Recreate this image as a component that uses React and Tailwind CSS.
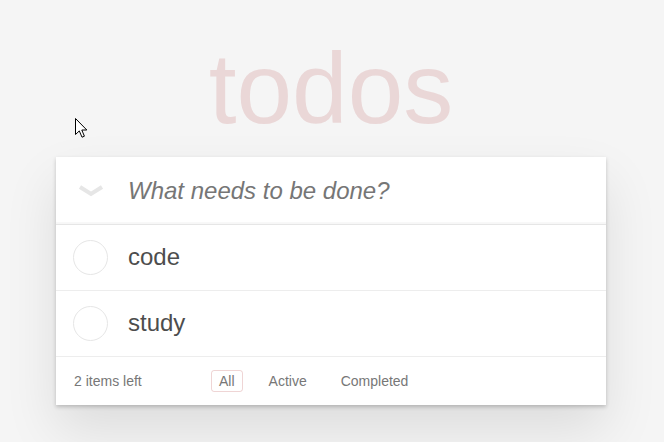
import { useState } from "react";

const initialTodos = [
  { id: 1, title: "code", completed: false },
  { id: 2, title: "study", completed: false },
];

function Chevron() {
  return (
    <svg width="26" height="14" viewBox="0 0 26 14" fill="none">
      <path d="M2 3 L13 10 L24 3" stroke="#e6e6e6" strokeWidth="4" strokeLinejoin="miter" />
    </svg>
  );
}

function Cursor() {
  return (
    <svg
      className="absolute left-[75px] top-[118px]"
      width="14"
      height="21"
      viewBox="0 0 14 21"
    >
      <path
        d="M0.5 0.5 L0.5 16.5 L4.3 12.9 L7 19.2 L9.4 18.2 L6.8 12 L11.8 12 Z"
        fill="#fff"
        stroke="#000"
        strokeWidth="1"
        strokeLinejoin="round"
      />
    </svg>
  );
}

export default function App() {
  const [todos] = useState(initialTodos);
  const [filter, setFilter] = useState("All");
  const left = todos.filter((t) => !t.completed).length;

  return (
    <div className="relative min-h-screen bg-[#f5f5f5] font-['Liberation_Sans',Arial,sans-serif] text-[#4d4d4d]">
      <Cursor />
      <div className="ml-[56px] w-[550px] pt-[38px]">
        <h1 className="mb-[19px] text-center text-[100px] font-thin leading-[100px] text-[rgba(175,47,47,0.15)]">
          todos
        </h1>

        <section className="bg-white shadow-[0_2px_4px_0_rgba(0,0,0,0.2),0_25px_50px_0_rgba(0,0,0,0.1)]">
          {/* header input */}
          <header className="flex h-[67px] items-center shadow-[inset_0_-2px_1px_rgba(0,0,0,0.03)]">
            <div className="flex w-[70px] justify-center">
              <Chevron />
            </div>
            <input
              className="ml-[2px] flex-1 bg-transparent pr-4 text-[24px] italic text-[#4d4d4d] outline-none placeholder:text-[#767676]"
              placeholder="What needs to be done?"
            />
          </header>

          {/* list */}
          <ul className="border-t border-[#e6e6e6]">
            {todos.map((todo) => (
              <li
                key={todo.id}
                className="flex h-[66px] items-center border-b border-[#ededed]"
              >
                <div className="ml-[17px] h-[35px] w-[35px] rounded-full border border-[#e6e6e6]" />
                <label className="ml-[20px] text-[24px] leading-[1.2] text-[#4d4d4d]">
                  {todo.title}
                </label>
              </li>
            ))}
          </ul>

          {/* footer */}
          <footer className="flex h-[48px] items-center px-[18px] text-[14px] text-[#777]">
            <span className="w-[137px]">{left} items left</span>
            <ul className="flex gap-[18px]">
              {["All", "Active", "Completed"].map((f) => (
                <li key={f}>
                  <button
                    onClick={() => setFilter(f)}
                    className={
                      "rounded-[3px] border px-[7px] py-[1px] leading-[18px] " +
                      (filter === f
                        ? "border-[rgba(175,47,47,0.2)]"
                        : "border-transparent")
                    }
                  >
                    {f}
                  </button>
                </li>
              ))}
            </ul>
          </footer>
        </section>
      </div>
    </div>
  );
}
